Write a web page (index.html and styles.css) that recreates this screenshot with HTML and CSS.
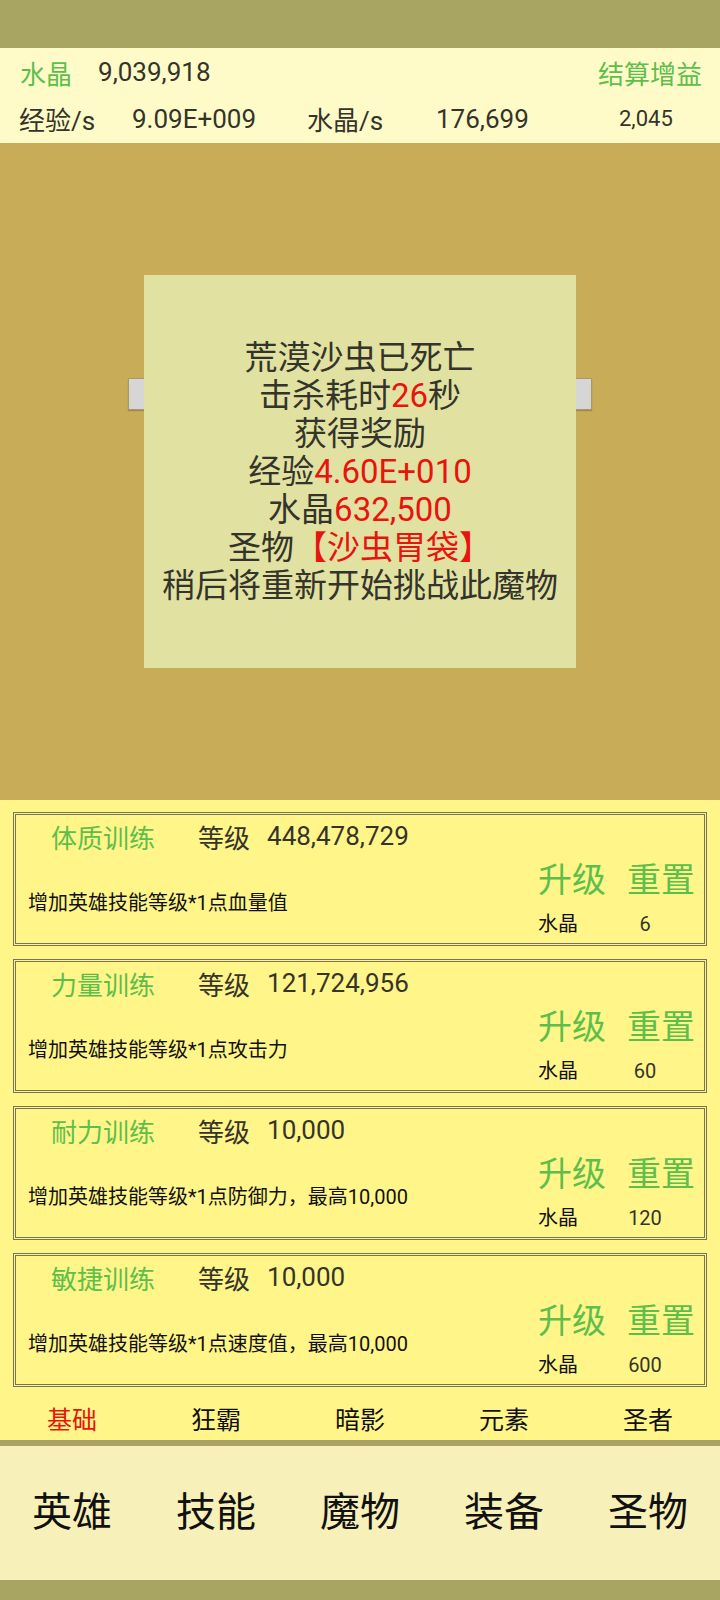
FILE: index.html
```html
<!DOCTYPE html>
<html lang="zh">
<head>
    <meta charset="UTF-8">
    <meta name="viewport" content="width=device-width, initial-scale=1.0">
    <title>训练</title>
    <link rel="stylesheet" href="styles.css">
</head>
<body>
    <div class="topbar"></div>

    <div class="header">
        <div class="row row1">
            <span class="green label">水晶</span>
            <span class="val">9,039,918</span>
            <span class="green settle">结算增益</span>
        </div>
        <div class="row row2">
            <span class="c1">经验/s</span>
            <span class="c2">9.09E+009</span>
            <span class="c3">水晶/s</span>
            <span class="c4">176,699</span>
            <span class="c5">2,045</span>
        </div>
    </div>

    <div class="stage">
        <div class="hpbar"></div>
        <div class="dialog">
            <p>荒漠沙虫已死亡</p>
            <p>击杀耗时<span class="red">26</span>秒</p>
            <p>获得奖励</p>
            <p>经验<span class="red">4.60E+010</span></p>
            <p>水晶<span class="red">632,500</span></p>
            <p>圣物<span class="red">【沙虫胃袋】</span></p>
            <p>稍后将重新开始挑战此魔物</p>
        </div>
    </div>

    <div class="panel">
        <div class="card">
            <div class="card-top">
                <span class="name">体质训练</span>
                <span class="lv">等级</span>
                <span class="lvnum">448,478,729</span>
            </div>
            <div class="card-body">
                <div class="desc">增加英雄技能等级*1点血量值</div>
                <div class="ops">
                    <div class="btns"><span>升级</span><span>重置</span></div>
                    <div class="cost">水晶<span class="num">6</span></div>
                </div>
            </div>
        </div>
        <div class="card">
            <div class="card-top">
                <span class="name">力量训练</span>
                <span class="lv">等级</span>
                <span class="lvnum">121,724,956</span>
            </div>
            <div class="card-body">
                <div class="desc">增加英雄技能等级*1点攻击力</div>
                <div class="ops">
                    <div class="btns"><span>升级</span><span>重置</span></div>
                    <div class="cost">水晶<span class="num">60</span></div>
                </div>
            </div>
        </div>
        <div class="card">
            <div class="card-top">
                <span class="name">耐力训练</span>
                <span class="lv">等级</span>
                <span class="lvnum">10,000</span>
            </div>
            <div class="card-body">
                <div class="desc">增加英雄技能等级*1点防御力，最高10,000</div>
                <div class="ops">
                    <div class="btns"><span>升级</span><span>重置</span></div>
                    <div class="cost">水晶<span class="num">120</span></div>
                </div>
            </div>
        </div>
        <div class="card">
            <div class="card-top">
                <span class="name">敏捷训练</span>
                <span class="lv">等级</span>
                <span class="lvnum">10,000</span>
            </div>
            <div class="card-body">
                <div class="desc">增加英雄技能等级*1点速度值，最高10,000</div>
                <div class="ops">
                    <div class="btns"><span>升级</span><span>重置</span></div>
                    <div class="cost">水晶<span class="num">600</span></div>
                </div>
            </div>
        </div>

        <ul class="subtabs">
            <li class="active">基础</li>
            <li>狂霸</li>
            <li>暗影</li>
            <li>元素</li>
            <li>圣者</li>
        </ul>
    </div>

    <ul class="nav">
        <li>英雄</li>
        <li>技能</li>
        <li>魔物</li>
        <li>装备</li>
        <li>圣物</li>
    </ul>
    <div class="bottombar"></div>
</body>
</html>
```

FILE: styles.css
```css
*{
    margin: 0px;
    padding: 0px;
    list-style: none;
    box-sizing: border-box;
}
body{
    width: 720px;
    font-family: Roboto, "Noto Sans CJK SC", sans-serif;
    color: #34342a;
    background: #a8a462;
}
.green{
    color: #5dbf4b;
}
.red{
    color: #e8140e;
}
.topbar{
    height: 48px;
    background: #a8a462;
}

/* header */
.header{
    height: 95px;
    background: #fffbc8;
}
.header .row{
    display: flex;
    align-items: center;
    height: 47px;
    font-size: 26px;
}
.header .row1{
    padding: 0 18px 0 20px;
    height: 46px;
    padding-top: 2px;
}
.header .row1 .val{
    margin-left: 26px;
}
.header .row1 .settle{
    margin-left: auto;
}
.header .row2{
    padding-left: 19px;
    height: 49px;
}
.header .row2 .c1{ width: 113px; }
.header .row2 .c2{ width: 175px; }
.header .row2 .c3{ width: 129px; }
.header .row2 .c4{ width: 183px; }
.header .row2 .c5{ font-size: 22px; }

/* game area */
.stage{
    position: relative;
    height: 657px;
    background: #c8ac58;
    display: flex;
    align-items: center;
    justify-content: center;
}
.stage .hpbar{
    position: absolute;
    left: 128px;
    top: 235px;
    width: 464px;
    height: 32px;
    background: #d6d6d6;
    border: 1px solid #a89a66;
    box-shadow: 0 1px 1px rgba(0,0,0,0.2);
}
.stage .dialog{
    position: relative;
    width: 432px;
    height: 393px;
    background: #e1e1a1;
    display: flex;
    flex-direction: column;
    justify-content: center;
    align-items: center;
    font-size: 33px;
    line-height: 38px;
    color: #34342a;
    white-space: nowrap;
}

/* training panel */
.panel{
    height: 640px;
    background: #fff589;
    padding: 12px 13px 0 13px;
}
.card{
    height: 134px;
    border: 3px double #77745e;
    margin-bottom: 13px;
    display: flex;
    flex-direction: column;
}
.card-top{
    height: 42px;
    display: flex;
    align-items: center;
    padding-left: 35px;
    font-size: 26px;
}
.card-top .name{
    width: 147px;
    color: #5dbf4b;
}
.card-top .lvnum{
    margin-left: 17px;
}
.card-body{
    flex: 1;
    display: flex;
    padding: 0 9px 0 12px;
}
.card-body .desc{
    align-self: center;
    font-size: 20px;
    color: #111;
    margin-top: 2px;
}
.card-body .ops{
    margin-left: auto;
    margin-right: 0px;
}
.ops .btns{
    display: flex;
    gap: 21px;
    font-size: 34px;
    line-height: 46px;
    color: #5dbf4b;
}
.ops .cost{
    margin-top: 8px;
    font-size: 20px;
    line-height: 26px;
    color: #111;
}
.ops .cost .num{
    display: inline-block;
    width: 70px;
    margin-left: 32px;
    text-align: center;
    color: #34342a;
}

.subtabs{
    display: flex;
    margin: 17px -13px 0 -13px;
    height: 34px;
}
.subtabs li{
    flex: 1;
    text-align: center;
    font-size: 25px;
    line-height: 34px;
    color: #111;
}
.subtabs li.active{
    color: #e8140e;
}

/* bottom nav */
.nav{
    display: flex;
    height: 140px;
    border-top: 6px solid #aaa164;
    background: #f7f0b8;
}
.nav li{
    flex: 1;
    text-align: center;
    font-size: 40px;
    line-height: 134px;
    color: #111;
}
.bottombar{
    height: 20px;
    background: #a8a462;
}
```
